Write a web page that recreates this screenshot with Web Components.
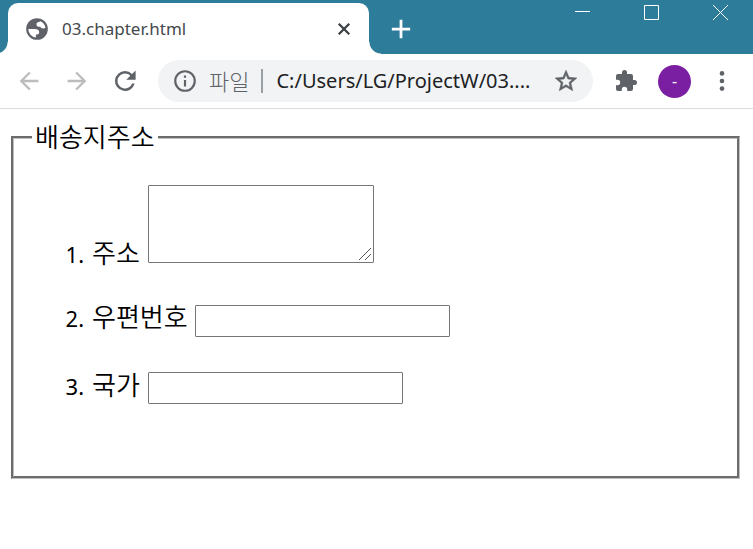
<!DOCTYPE html>
<html lang="ko">
<head>
<meta charset="utf-8">
<meta name="viewport" content="width=device-width, initial-scale=1">
<title>03.chapter.html</title>
<style>
  body {
    margin: 0;
    background: #fff;
    color: #000;
    font-family: "Noto Sans", "Noto Sans CJK KR", sans-serif;
  }
</style>
</head>
<body>
<browser-window>
  <browser-tab slot="tab">03.chapter.html</browser-tab>
  <address-bar slot="address" scheme="파일" url="C:/Users/LG/ProjectW/03...."></address-bar>
  <address-form legend="배송지주소">
    <form-field label="주소" type="textarea"></form-field>
    <form-field label="우편번호"></form-field>
    <form-field label="국가"></form-field>
  </address-form>
</browser-window>

<script>
const ICONS = {
  back: '<path d="M20 11H7.83l5.59-5.59L12 4l-8 8 8 8 1.41-1.41L7.83 13H20z"/>',
  forward: '<path d="M12 4l-1.41 1.41L16.17 11H4v2h12.17l-5.58 5.59L12 20l8-8z"/>',
  reload: '<path d="M17.65 6.35A7.96 7.96 0 0 0 12 4a8 8 0 1 0 7.73 10h-2.08A6 6 0 1 1 12 6c1.66 0 3.14.69 4.22 1.78L13 11h7.500V3.500z"/>',
  info: '<path d="M11 17h2v-6h-2zm1-15a10 10 0 1 0 0 20 10 10 0 0 0 0-20zm0 18a8 8 0 1 1 0-16 8 8 0 0 1 0 16zM11 9h2V7h-2z"/>',
  star: '<path d="M22 9.24l-7.19-.62L12 2 9.19 8.63 2 9.24l5.46 4.73L5.82 21 12 17.27 18.18 21l-1.63-7.03zM12 15.4l-3.76 2.27 1-4.28-3.32-2.88 4.38-.38L12 6.1l1.71 4.04 4.38.38-3.32 2.88 1 4.28z" stroke="currentColor" stroke-width=".5"/>',
  puzzle: '<path d="M20.500 11H19V7a2 2 0 0 0-2-2h-4V3.500a2.500 2.500 0 0 0-5 0V5H4a2 2 0 0 0-2 2v3.800h1.500a2.700 2.700 0 0 1 0 5.400H2V20a2 2 0 0 0 2 2h3.800v-1.500a2.700 2.700 0 0 1 5.400 0V22H17a2 2 0 0 0 2-2v-4h1.500a2.500 2.500 0 0 0 0-5z"/>',
  more: '<circle cx="12" cy="5.500" r="2"/><circle cx="12" cy="12" r="2"/><circle cx="12" cy="18.500" r="2"/>',
  globe: '<path d="M12 2a10 10 0 1 0 0 20 10 10 0 0 0 0-20zM4 12h5.500c3 0 4.500 1 4.500 3s-1.500 2-3 2v2.900A8 8 0 0 1 4 12zm15.800-1.500c-1 1.500-3.800 1.500-4.800-.5-2 0-3.500-.5-3.500-2.500 0-1.600 1.500-2 3-2V4.600a8 8 0 0 1 5.300 5.900z"/>',
  close: '<path d="M5 5l14 14M19 5L5 19" fill="none" stroke="currentColor" stroke-width="3"/>',
  plus: '<path d="M12 2v20M2 12h20" fill="none" stroke="currentColor" stroke-width="3"/>'
};

function icon(name, size) {
  return `<svg width="${size}" height="${size}" viewBox="0 0 24 24" fill="currentColor" aria-hidden="true">${ICONS[name]}</svg>`;
}

const BUTTON_RESET = `
  button {
    display: flex;
    align-items: center;
    justify-content: center;
    margin: 0;
    padding: 0;
    border: 0;
    background: none;
    color: inherit;
    font: inherit;
  }
  svg { display: block; }
`;

class BrowserTab extends HTMLElement {
  constructor() {
    super();
    this.attachShadow({ mode: 'open' });
  }

  connectedCallback() {
    this.shadowRoot.innerHTML = `
      <style>
        ${BUTTON_RESET}
        :host {
          display: flex;
          align-items: center;
          flex: 0 1 361px;
          min-width: 0;
          box-sizing: border-box;
          padding: 0 16px;
          gap: 12px;
          position: relative;
          background: #fff;
          border-radius: 10px 10px 0 0;
          color: #5f6368;
          font-size: 17px;
          line-height: 24px;
        }
        /* flared feet of the tab */
        :host::before, :host::after {
          content: "";
          position: absolute;
          bottom: 0;
          width: 12px;
          height: 12px;
        }
        :host::before {
          right: 100%;
          background: radial-gradient(circle at 0 0, transparent 11px, #fff 12px);
        }
        :host::after {
          left: 100%;
          background: radial-gradient(circle at 100% 0, transparent 11px, #fff 12px);
        }
        .title {
          flex: 1;
          min-width: 0;
          overflow: hidden;
          white-space: nowrap;
          color: #45494d;
        }
        button { width: 18px; height: 24px; color: #3c4043; }
      </style>
      ${icon('globe', 26)}
      <span class="title"><slot></slot></span>
      <button aria-label="닫기">${icon('close', 18)}</button>
    `;
  }
}

class AddressBar extends HTMLElement {
  constructor() {
    super();
    this.attachShadow({ mode: 'open' });
  }

  connectedCallback() {
    this.shadowRoot.innerHTML = `
      <style>
        ${BUTTON_RESET}
        :host {
          display: flex;
          align-items: center;
          flex: 1;
          min-width: 0;
          height: 42px;
          box-sizing: border-box;
          padding: 0 14px;
          background: #f1f3f4;
          border-radius: 21px;
          color: #5f6368;
          font-size: 20px;
        }
        label {
          margin-left: 11px;
          padding-right: 12px;
          border-right: 2px solid #9aa0a6;
          font-size: 22px;
          font-weight: 300;
          line-height: 24px;
          white-space: nowrap;
        }
        input {
          flex: 1;
          min-width: 0;
          margin: 0 8px 0 13px;
          padding: 0;
          border: 0;
          outline: 0;
          background: none;
          color: #202124;
          font: inherit;
          line-height: 28px;
        }
      </style>
      <button aria-label="사이트 정보">${icon('info', 26)}</button>
      <label for="url">${this.getAttribute('scheme')}</label>
      <input id="url" type="text" value="${this.getAttribute('url')}">
      <button aria-label="북마크">${icon('star', 26)}</button>
    `;
  }
}

class BrowserWindow extends HTMLElement {
  constructor() {
    super();
    this.attachShadow({ mode: 'open' });
  }

  connectedCallback() {
    this.shadowRoot.innerHTML = `
      <style>
        ${BUTTON_RESET}
        :host { display: block; }
        .titlebar {
          display: flex;
          height: 54px;
          box-sizing: border-box;
          padding: 3px 0 0 8px;
          background: #2d7c9a;
          color: #fff;
        }
        .new-tab { width: 64px; }
        .controls {
          display: flex;
          gap: 4px;
          align-self: flex-start;
          margin-left: auto;
        }
        .controls button { width: 65px; height: 19px; }
        .toolbar {
          display: flex;
          align-items: center;
          padding: 6px 15px 6px 5px;
          border-bottom: 1px solid #dadce0;
          color: #5f6368;
        }
        .nav { display: flex; margin-right: 9px; }
        .nav button { width: 48px; height: 40px; }
        .nav [disabled] { color: #babcbe; }
        .actions { display: flex; align-items: center; margin-left: 17px; }
        .actions button { width: 32px; height: 40px; }
        .actions .avatar {
          width: 33px;
          height: 33px;
          margin: 0 15px 0 16px;
          border-radius: 50%;
          background: #7b1fa2;
          color: #fff;
          font-size: 16px;
        }
        main { padding: 12px 13px 12px 11px; }
      </style>
      <header>
        <div class="titlebar">
          <slot name="tab"></slot>
          <button class="new-tab" aria-label="새 탭">${icon('plus', 22)}</button>
          <div class="controls">
            <button aria-label="최소화"><svg width="15" height="15" viewBox="0 0 15 15"><path d="M0 6.500h15" stroke="#fff"/></svg></button>
            <button aria-label="최대화"><svg width="15" height="15" viewBox="0 0 15 15"><path d="M.5.5h14v14H.5z" fill="none" stroke="#fff"/></svg></button>
            <button aria-label="창 닫기"><svg width="15" height="15" viewBox="0 0 15 15"><path d="M0 0l15 15M15 0L0 15" stroke="#fff"/></svg></button>
          </div>
        </div>
        <div class="toolbar">
          <nav class="nav">
            <button disabled aria-label="뒤로">${icon('back', 28)}</button>
            <button disabled aria-label="앞으로">${icon('forward', 28)}</button>
            <button aria-label="새로고침">${icon('reload', 30)}</button>
          </nav>
          <slot name="address"></slot>
          <div class="actions">
            <button aria-label="확장 프로그램">${icon('puzzle', 24)}</button>
            <button class="avatar">-</button>
            <button aria-label="메뉴">${icon('more', 28)}</button>
          </div>
        </div>
      </header>
      <main><slot></slot></main>
    `;
  }
}

class FormField extends HTMLElement {
  constructor() {
    super();
    this.attachShadow({ mode: 'open' });
  }

  connectedCallback() {
    const number = [...this.parentElement.children].indexOf(this) + 1;
    const control = this.getAttribute('type') === 'textarea'
      ? '<textarea id="control"></textarea>'
      : '<input id="control" type="text">';
    this.shadowRoot.innerHTML = `
      <style>
        :host { display: list-item; }
        :host::marker {
          content: "${number}. \\200a";
          font-size: 22px;
        }
        label { font-weight: 350; }
        input, textarea {
          box-sizing: border-box;
          max-width: 100%;
          margin: 0 0 0 1px;
          padding: 2px 3px 4px;
          border: 1px solid #767676;
          border-radius: 1px;
          background: #fff;
          font: 20px "Noto Sans", "Noto Sans CJK KR", sans-serif;
        }
        input { width: 255px; height: 32px; }
        textarea { width: 226px; height: 78px; }
        textarea::-webkit-resizer {
          background: url("data:image/svg+xml,%3Csvg xmlns='http://www.w3.org/2000/svg' width='15' height='15'%3E%3Cpath d='M1 13L13 1M7 13l6-6' stroke='%23555'/%3E%3C/svg%3E") no-repeat;
        }
      </style>
      <label for="control">${this.getAttribute('label')}</label>
      ${control}
    `;
  }
}

class AddressForm extends HTMLElement {
  constructor() {
    super();
    this.attachShadow({ mode: 'open' });
  }

  connectedCallback() {
    this.shadowRoot.innerHTML = `
      <style>
        :host { display: block; }
        fieldset {
          min-width: 0;
          margin: 0;
          padding: 32px 18px 72px;
          border: 3px groove #c0c0c0;
        }
        legend {
          padding: 0 3px;
          font-size: 26px;
          font-weight: 350;
          line-height: 32px;
        }
        .list {
          display: flex;
          flex-direction: column;
          gap: 32px;
          padding-left: 60px;
          list-style: decimal;
          font-size: 26px;
          line-height: 32px;
        }
      </style>
      <form>
        <fieldset>
          <legend>${this.getAttribute('legend')}</legend>
          <div class="list"><slot></slot></div>
        </fieldset>
      </form>
    `;
  }
}

customElements.define('browser-tab', BrowserTab);
customElements.define('address-bar', AddressBar);
customElements.define('browser-window', BrowserWindow);
customElements.define('form-field', FormField);
customElements.define('address-form', AddressForm);
</script>
</body>
</html>
